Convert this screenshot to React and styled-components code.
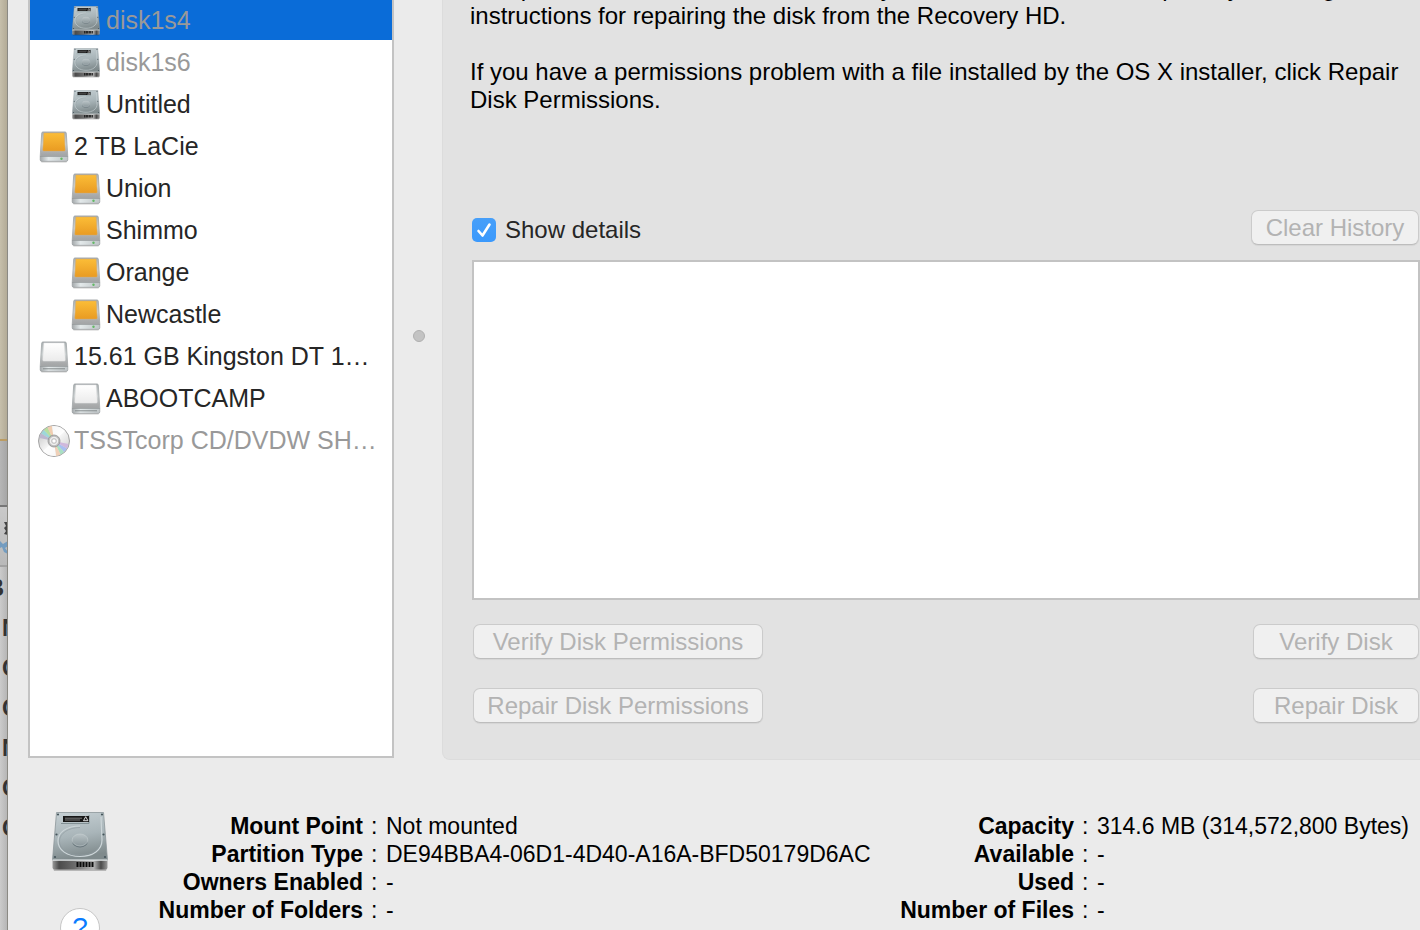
import React from "react";
import styled, { createGlobalStyle } from "styled-components";

const Global = createGlobalStyle`
  *, *::before, *::after { box-sizing: border-box; }
  body { margin: 0; background: #ebebeb; overflow: hidden; }
  body, button, input, textarea {
    font-family: "Liberation Sans", Arial, Helvetica, sans-serif;
  }
`;

const Desktop = styled.div`
  display: flex;
  height: 100vh;
  overflow: hidden;
  color: #000;
`;

const Backdrop = styled.div`
  flex: 0 0 8px;
  display: flex;
  flex-direction: column;
  overflow: hidden;
  border-right: 1px solid #8b8a84;
  color: #333;
`;
const Wallpaper = styled.div`
  height: 439px;
  background: linear-gradient(90deg, #c6bfab, #b3ab97);
`;
const AmberRule = styled.div`
  height: 2px;
  background: #bb9c63;
`;
const BackTitle = styled.div`
  height: 64px;
  background: linear-gradient(90deg, #b6b6b6, #a6a6a6);
`;
const BackToolbar = styled.div`
  height: 62px;
  border-top: 2px solid #777;
  border-bottom: 2px solid #a2a2a2;
  background: linear-gradient(#c9c9c9, #b9b9b9);
  svg { display: block; }
`;
const BackList = styled.div`
  flex: 1;
  padding-top: 1px;
  background: linear-gradient(90deg, #cbcbcb, #b6b6b6);
`;
const BackRow = styled.div`
  height: 40px;
  line-height: 40px;
  font-size: 23px;
  padding-left: ${(p) => (p.$head ? 0 : 2)}px;
  direction: ${(p) => (p.$head ? "rtl" : "ltr")};
  padding-right: ${(p) => (p.$head ? 3 : 0)}px;
  font-weight: 700;
`;

const Window = styled.main`
  flex: 1;
  min-width: 0;
  display: flex;
  flex-direction: column;
  background: #ebebeb;
`;
const Upper = styled.div`
  display: flex;
  padding-left: 20px;
`;

const DiskList = styled.ul`
  flex: 0 0 366px;
  list-style: none;
  margin: -2px 0 2px;
  padding: 0;
  background: #fff;
  border: 2px solid #c3c3c3;
  border-top: 0;
`;
const DiskRow = styled.li`
  display: flex;
  align-items: center;
  gap: 4px;
  height: 42px;
  padding-top: 2px;
  padding-left: ${(p) => (p.$child ? 40 : 8)}px;
  background: ${(p) => (p.$selected ? "#0a6cd8" : "transparent")};
  color: ${(p) => (p.$dim ? "#999" : "#262626")};
  font-size: 25px;
  line-height: 40px;
  white-space: nowrap;
`;
const IconSlot = styled.span`
  flex: 0 0 32px;
  display: flex;
  justify-content: center;
  padding-top: 2px;
`;

const Splitter = styled.div`
  flex: 0 0 48px;
  display: flex;
  align-items: flex-start;
  justify-content: center;
  padding: 330px 0 0 2px;
`;
const Grip = styled.span`
  width: 12px;
  height: 12px;
  border-radius: 50%;
  background: #c3c3c3;
  border: 1px solid #b0b0b0;
`;

const Panel = styled.section`
  flex: 1;
  min-width: 0;
  padding: 0 0 36px 29px;
  background: #e2e2e2;
  border: 1px solid #dcdcdc;
  border-width: 0 0 1px 1px;
  border-bottom-left-radius: 8px;
`;
const Intro = styled.div`
  height: 114px;
  display: flex;
  flex-direction: column;
  justify-content: flex-end;
  overflow: hidden;
  margin-left: -2px;
  font-size: 24px;
  line-height: 28px;
  white-space: nowrap;
  p { margin: 0; }
  p + p { margin-top: 28px; }
`;
const DetailsBar = styled.div`
  display: flex;
  justify-content: space-between;
  align-items: center;
  margin-top: 96px;
  padding-right: 1px;
`;
const CheckLabel = styled.label`
  display: flex;
  align-items: center;
  gap: 9px;
  padding-top: 4px;
  font-size: 24px;
  color: #262626;
`;
const CheckFace = styled.span`
  display: grid;
  width: 24px;
  height: 24px;
  > * { grid-area: 1 / 1; }
  svg { pointer-events: none; }
`;
const CheckInput = styled.input`
  appearance: none;
  margin: 0;
  border-radius: 5px;
  background: linear-gradient(#479ff9, #3b99fc);
`;
const PushButton = styled.button`
  width: ${(p) => p.$width}px;
  height: 35px;
  padding: 1px 0 0;
  border: 1px solid #cbcbcb;
  border-bottom-color: #bdbdbd;
  border-radius: 7px;
  background: #f0f0f0;
  box-shadow: 0 1px 1px rgba(0, 0, 0, 0.06);
  color: #b3b3b3;
  font-size: 24px;
  line-height: 32px;
  white-space: nowrap;
`;
const History = styled.textarea`
  display: block;
  width: 100%;
  height: 340px;
  margin: 15px 0 24px;
  border: 2px solid #c3c3c3;
  background: #fff;
  resize: none;
  outline: 0;
  font-size: 24px;
`;
const ButtonRow = styled.div`
  display: flex;
  justify-content: space-between;
  padding: 0 1px;
  & + & { margin-top: 29px; }
`;

const Footer = styled.footer`
  display: flex;
  align-items: flex-start;
  padding: 52px 0 0 43px;
`;
const FooterIcons = styled.div`
  flex: 0 0 58px;
  display: flex;
  flex-direction: column;
  align-items: center;
  gap: 36px;
`;
const HelpButton = styled.button`
  width: 40px;
  height: 40px;
  padding: 0;
  border: 1px solid #c6c6c6;
  border-radius: 50%;
  background: #fff;
  color: #0a7cff;
  font-size: 28px;
  line-height: 38px;
`;
const Facts = styled.dl`
  display: grid;
  grid-template-columns: ${(p) => p.$columns};
  margin: 0;
  margin-left: ${(p) => (p.$end ? "auto" : 0)};
  font-size: 23px;
  line-height: 28px;
  white-space: nowrap;
  dt {
    display: flex;
    justify-content: flex-end;
    font-weight: 700;
  }
  dt::after {
    content: ":";
    width: 23px;
    padding-left: 8px;
    font-weight: 400;
  }
  dd { margin: 0; }
`;

function HardDisk({ width }) {
  const id = `hd${width}`;
  const screws = [[6, 2.5], [50, 2.5], [4.5, 22.5], [51.5, 22.5], [3, 45], [53, 45]];
  return (
    <svg width={width} height={(width * 15) / 14} viewBox="0 0 56 60" aria-hidden="true">
      <defs>
        <linearGradient id={`${id}t`} x1="0" y1="0" x2="0.2" y2="1">
          <stop offset="0" stopColor="#c6d0d4" />
          <stop offset="0.55" stopColor="#a9b5b9" />
          <stop offset="1" stopColor="#7f8a8c" />
        </linearGradient>
        <linearGradient id={`${id}f`} x1="0" y1="0" x2="1" y2="0">
          <stop offset="0" stopColor="#999" />
          <stop offset="0.12" stopColor="#4b4b4b" />
          <stop offset="0.4" stopColor="#6b6b6b" />
          <stop offset="0.75" stopColor="#b5b5b5" />
          <stop offset="0.88" stopColor="#4b4b4b" />
          <stop offset="1" stopColor="#999" />
        </linearGradient>
        <linearGradient id={`${id}h`} x1="0" y1="0" x2="0" y2="1">
          <stop offset="0" stopColor="#b9c3c6" />
          <stop offset="1" stopColor="#8b979b" />
        </linearGradient>
      </defs>
      <path d="M1 56h54l-1 3H2z" fill="#000" opacity=".22" />
      <path d="M4.500 .5h47L55.500 48H.5z" fill={`url(#${id}t)`} stroke="#8b9699" strokeWidth=".8" />
      <path d="M.5 48h55v7.500q0 2-2 2h-51q-2 0-2-2z" fill={`url(#${id}f)`} />
      <path d="M.5 48.200h55" stroke="#e5eaeb" strokeWidth="1.200" />
      <path d="M9 11.500h28V3" fill="none" stroke="#829094" strokeWidth="1" />
      <rect x="11" y="4" width="26" height="6" fill="#171717" />
      <path d="M13 6.200h17M13 8h15" stroke="#858585" strokeWidth=".9" />
      <path d="m31.500 8.700 2.200-4 2.200 4z" fill="none" stroke="#eee" strokeWidth=".9" />
      <path
        d="M28 14C15 14 6 20 6 29c0 9 9 15.500 22 15.500S50 38 50 28L49 5"
        fill="none"
        stroke="#ccd5d8"
        strokeWidth="1.200"
      />
      <path d="M28 15.500C17 15.500 7.500 21 7.500 29c0 8 8 14 20.500 14s20.500-5.500 20.500-14" fill="none" stroke="#8d999e" strokeWidth=".6" />
      <ellipse cx="28" cy="29.500" rx="7.800" ry="6" fill="#66747a" />
      <ellipse cx="28" cy="28" rx="7.800" ry="6" fill={`url(#${id}h)`} stroke="#c7d0d2" strokeWidth=".6" />
      {screws.map(([x, y]) => (
        <circle key={`${x}-${y}`} cx={x} cy={y} r="1.100" fill="#45545a" />
      ))}
      <path d="M25.500 50v5m3-5v5m3-5v5m3-5v5m3-5v5m3-5v5" stroke="#0b0b0b" strokeWidth="2" />
    </svg>
  );
}

function ExternalDrive({ id, orange }) {
  return (
    <svg width="30" height="32" viewBox="0 0 30 32" aria-hidden="true">
      <defs>
        <linearGradient id={`${id}p`} x1="0" y1="0" x2="0" y2="1">
          <stop offset="0" stopColor={orange ? "#fbbd37" : "#ffffff"} />
          <stop offset="1" stopColor={orange ? "#e99b22" : "#ebebeb"} />
        </linearGradient>
        <linearGradient id={`${id}b`} x1="0" y1="0" x2="0" y2="1">
          <stop offset="0" stopColor="#a9afb1" />
          <stop offset="0.5" stopColor="#cdd2d3" />
          <stop offset="0.85" stopColor="#a9abac" />
          <stop offset="1" stopColor="#a2a4a5" />
        </linearGradient>
        <linearGradient id={`${id}l`} x1="0" y1="0" x2="1" y2="0">
          <stop offset="0" stopColor="#a4a9ab" />
          <stop offset="0.3" stopColor="#e3e9ea" />
          <stop offset="1" stopColor="#bfc5c7" />
        </linearGradient>
      </defs>
      <path d="M1.500 29h27l-1 2.500h-25z" fill="#000" opacity=".2" />
      <path d="M4 .9h22q1.200 0 1.300 1.300L28.800 25.500H1.200L2.700 2.200Q2.800 .9 4 .9z" fill={`url(#${id}b)`} stroke="#9a9fa1" strokeWidth=".7" />
      <path d="M4.900 2h20.200L26.200 19q0 1-1 1H4.800q-1 0-1-1z" fill={`url(#${id}p)`} stroke={orange ? "#d8ab63" : "#e6e6e6"} strokeWidth=".5" />
      <path d="M1.200 25.500h27.600v3.300q0 1.500-1.500 1.500H2.700q-1.500 0-1.500-1.500z" fill={`url(#${id}l)`} stroke="#8f9496" strokeWidth=".6" />
      {orange ? (
        <circle cx="22.500" cy="27.800" r="1.200" fill="#62b865" />
      ) : (
        <path d="M4 27.800h22" stroke="#7d8385" strokeWidth=".9" />
      )}
    </svg>
  );
}

function OpticalDisc() {
  return (
    <svg width="32" height="32" viewBox="0 0 32 32" aria-hidden="true">
      <defs>
        <linearGradient id="discBase" x1="0" y1="0" x2="1" y2="1">
          <stop offset="0" stopColor="#b9b9b9" />
          <stop offset="0.5" stopColor="#f7f7f7" />
          <stop offset="1" stopColor="#c5c5c5" />
        </linearGradient>
      </defs>
      <circle cx="16" cy="16" r="15.500" fill="url(#discBase)" stroke="#9b9b9b" strokeWidth=".9" />
      <path d="M16 16 3 8.500A15 15 0 0 1 6 5z" fill="#9ed7da" />
      <path d="M16 16 6 5a15 15 0 0 1 3.500-2.500z" fill="#b7dfa0" />
      <path d="M16 16 9.500 2.500A15 15 0 0 1 14 1.100z" fill="#f0cdb0" />
      <path d="M16 16 1.500 13A15 15 0 0 1 3 8.500z" fill="#bcb7cf" />
      <path d="M16 16 14 1.100A15 15 0 0 1 27 6z" fill="#fff" opacity=".8" />
      <path d="M16 16 29 23.500A15 15 0 0 1 26 27z" fill="#a8bff0" />
      <path d="M16 16 26 27a15 15 0 0 1-3.500 2.500z" fill="#a9e0c3" />
      <path d="M16 16 22.500 29.500A15 15 0 0 1 18 30.900z" fill="#efd0b8" />
      <path d="M16 16 30.500 19a15 15 0 0 1-1.500 4.500z" fill="#cfb8dc" />
      <path d="M16 16 18 30.900A15 15 0 0 1 5 26z" fill="#fff" opacity=".8" />
      <circle cx="16" cy="16" r="6" fill="#bdbdbd" stroke="#929292" strokeWidth=".8" />
      <circle cx="16" cy="16" r="3.800" fill="#dedede" stroke="#f5f5f5" strokeWidth="1" />
      <circle cx="16" cy="16" r="2.200" fill="#fff" stroke="#aaa" strokeWidth=".7" />
    </svg>
  );
}

const disks = [
  { name: "disk1s4", kind: "hd", child: true, dim: true, selected: true },
  { name: "disk1s6", kind: "hd", child: true, dim: true },
  { name: "Untitled", kind: "hd", child: true },
  { name: "2 TB LaCie", kind: "orange" },
  { name: "Union", kind: "orange", child: true },
  { name: "Shimmo", kind: "orange", child: true },
  { name: "Orange", kind: "orange", child: true },
  { name: "Newcastle", kind: "orange", child: true },
  { name: "15.61 GB Kingston DT 1…", kind: "white" },
  { name: "ABOOTCAMP", kind: "white", child: true },
  { name: "TSSTcorp CD/DVDW SH…", kind: "disc", dim: true },
];

const volumeFacts = [
  ["Mount Point", "Not mounted"],
  ["Partition Type", "DE94BBA4-06D1-4D40-A16A-BFD50179D6AC"],
  ["Owners Enabled", "-"],
  ["Number of Folders", "-"],
];
const sizeFacts = [
  ["Capacity", "314.6 MB (314,572,800 Bytes)"],
  ["Available", "-"],
  ["Used", "-"],
  ["Number of Files", "-"],
];

function DiskIcon({ kind, index }) {
  if (kind === "hd") return <HardDisk width={28} />;
  if (kind === "disc") return <OpticalDisc />;
  return <ExternalDrive id={`drive${index}`} orange={kind === "orange"} />;
}

function FactList({ items, ...rest }) {
  return (
    <Facts {...rest}>
      {items.map(([label, value]) => (
        <React.Fragment key={label}>
          <dt>{label}</dt>
          <dd>{value}</dd>
        </React.Fragment>
      ))}
    </Facts>
  );
}

export default function App() {
  return (
    <>
      <Global />
      <Desktop>
        <Backdrop aria-hidden="true">
          <Wallpaper />
          <AmberRule />
          <BackTitle />
          <BackToolbar>
            <svg width="8" height="58" viewBox="0 0 8 58">
              <path d="M4 15h4v13l-4-1 2-3-2-3 2-2z" fill="#444" />
              <path d="M0 34l3 3 5-3v5l-3 2 3 4v2l-4-2-2-5-2 1z" fill="#739cc0" />
            </svg>
          </BackToolbar>
          <BackList>
            <BackRow $head>B</BackRow>
            {["N", "C", "C", "N", "C", "C"].map((letter, i) => (
              <BackRow key={i}>{letter}</BackRow>
            ))}
          </BackList>
        </Backdrop>
        <Window>
          <Upper>
            <DiskList>
              {disks.map((d, i) => (
                <DiskRow key={d.name} $child={d.child} $dim={d.dim} $selected={d.selected}>
                  <IconSlot>
                    <DiskIcon kind={d.kind} index={i} />
                  </IconSlot>
                  {d.name}
                </DiskRow>
              ))}
            </DiskList>
            <Splitter>
              <Grip />
            </Splitter>
            <Panel>
              <Intro>
                <p>
                  If Repair Disk is unavailable, click Verify Disk. If the disk needs repairs, you’ll be given
                  <br />
                  instructions for repairing the disk from the Recovery HD.
                </p>
                <p>
                  If you have a permissions problem with a file installed by the OS X installer, click Repair
                  <br />
                  Disk Permissions.
                </p>
              </Intro>
              <DetailsBar>
                <CheckLabel>
                  <CheckFace>
                    <CheckInput type="checkbox" defaultChecked />
                    <svg width="24" height="24" viewBox="0 0 24 24" aria-hidden="true">
                      <path d="M6.500 13l4 4.500L17.500 6.500" fill="none" stroke="#fff" strokeWidth="2.600" strokeLinecap="round" strokeLinejoin="round" />
                    </svg>
                  </CheckFace>
                  Show details
                </CheckLabel>
                <PushButton type="button" disabled $width={168}>Clear History</PushButton>
              </DetailsBar>
              <History readOnly aria-label="Details" />
              <ButtonRow>
                <PushButton type="button" disabled $width={290}>Verify Disk Permissions</PushButton>
                <PushButton type="button" disabled $width={166}>Verify Disk</PushButton>
              </ButtonRow>
              <ButtonRow>
                <PushButton type="button" disabled $width={290}>Repair Disk Permissions</PushButton>
                <PushButton type="button" disabled $width={166}>Repair Disk</PushButton>
              </ButtonRow>
            </Panel>
          </Upper>
          <Footer>
            <FooterIcons>
              <HardDisk width={56} />
              <HelpButton type="button" aria-label="Help">?</HelpButton>
            </FooterIcons>
            <FactList items={volumeFacts} $columns="277px auto" />
            <FactList items={sizeFacts} $columns="auto 323px" $end />
          </Footer>
        </Window>
      </Desktop>
    </>
  );
}
